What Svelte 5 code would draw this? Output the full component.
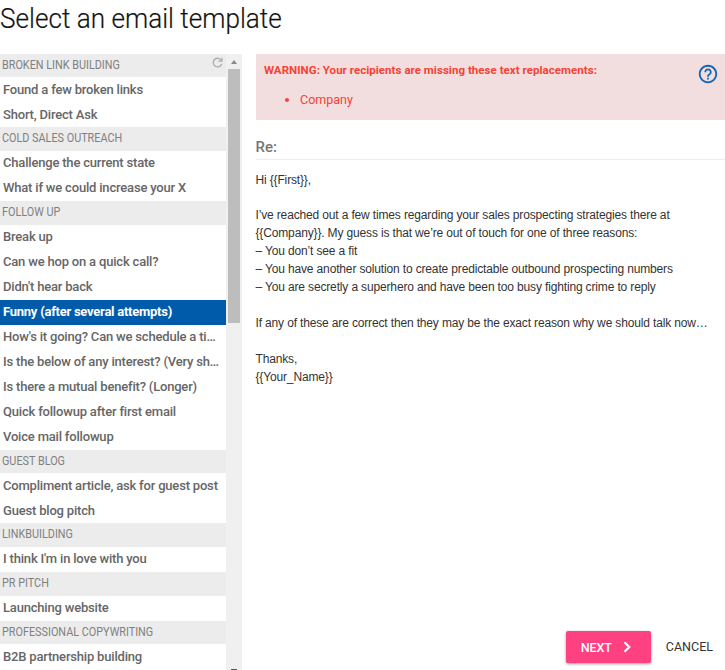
<script>
  let selected = $state("Funny (after several attempts)");

  const groups = [
    { name: "Broken link building", items: ["Found a few broken links", "Short, Direct Ask"] },
    { name: "Cold sales outreach", items: ["Challenge the current state", "What if we could increase your X"] },
    {
      name: "Follow up",
      items: [
        "Break up",
        "Can we hop on a quick call?",
        "Didn't hear back",
        "Funny (after several attempts)",
        "How's it going? Can we schedule a ti…",
        "Is the below of any interest? (Very sh…",
        "Is there a mutual benefit? (Longer)",
        "Quick followup after first email",
        "Voice mail followup",
      ],
    },
    { name: "Guest blog", items: ["Compliment article, ask for guest post", "Guest blog pitch"] },
    { name: "Linkbuilding", items: ["I think I'm in love with you"] },
    { name: "PR pitch", items: ["Launching website"] },
    { name: "Professional copywriting", items: ["B2B partnership building"] },
  ];

  const missing = ["Company"];

  const message = `Hi {{First}},

I’ve reached out a few times regarding your sales prospecting strategies there at
{{Company}}. My guess is that we’re out of touch for one of three reasons:
– You don’t see a fit
– You have another solution to create predictable outbound prospecting numbers
– You are secretly a superhero and have been too busy fighting crime to reply

If any of these are correct then they may be the exact reason why we should talk now…

Thanks,
{{Your_Name}}`;
</script>

<div class="dialog">
  <h1>Select an email template</h1>

  <div class="content">
    <aside class="sidebar">
      <div class="list">
        {#each groups as group, i}
          <div class="group-name">
            <span>{group.name}</span>
            {#if i === 0}
              <svg class="refresh" viewBox="0 0 12 12" aria-hidden="true">
                <path d="M10.1 3.7A4.7 4.7 0 1 0 10.5 7.6" />
                <path d="M10.8 0.9V4.6H7" />
              </svg>
            {/if}
          </div>
          {#each group.items as item}
            <button class="item" class:selected={item === selected} onclick={() => (selected = item)}>
              {item}
            </button>
          {/each}
        {/each}
      </div>
      <div class="scrollbar">
        <div class="arrow up"></div>
        <div class="thumb"></div>
        <div class="arrow down"></div>
      </div>
    </aside>

    <main class="preview">
      <div class="warning">
        <div class="warning-text">
          <strong>WARNING: Your recipients are missing these text replacements:</strong>
          <ul>
            {#each missing as field}
              <li>{field}</li>
            {/each}
          </ul>
        </div>
        <svg class="help" viewBox="0 0 24 24" aria-hidden="true">
          <path
            d="M11 18h2v-2h-2v2zm1-16C6.48 2 2 6.48 2 12s4.48 10 10 10 10-4.48 10-10S17.52 2 12 2zm0 18c-4.41 0-8-3.59-8-8s3.59-8 8-8 8 3.59 8 8-3.59 8-8 8zm0-14c-2.21 0-4 1.79-4 4h2c0-1.1.9-2 2-2s2 .9 2 2c0 2-3 1.75-3 5h2c0-2.25 3-2.5 3-5 0-2.21-1.79-4-4-4z"
          />
        </svg>
      </div>
      <div class="subject">Re:</div>
      <div class="message">{message}</div>
      <div class="actions">
        <button class="next">
          NEXT
          <svg viewBox="0 0 8 12" aria-hidden="true"><path d="M1.5 1.2L6.3 6L1.5 10.8" /></svg>
        </button>
        <button class="cancel">CANCEL</button>
      </div>
    </main>
  </div>
</div>

<style>
  :global(body) {
    background: #fff;
    overflow: hidden;
  }

  .dialog {
    height: 670px;
    display: flex;
    flex-direction: column;
    overflow: hidden;
    font-family: Roboto, sans-serif;
  }

  h1 {
    flex: none;
    height: 54px;
    margin: 0;
    box-sizing: border-box;
    padding-top: 1px;
    font-size: 28px;
    font-weight: 300;
    line-height: 35px;
    color: #111;
    white-space: nowrap;
    transform: scaleX(0.934);
    transform-origin: left;
    -webkit-text-stroke: 0.2px #222;
  }

  .content {
    flex: 1;
    min-height: 0;
    display: flex;
    gap: 13.5px;
  }

  .sidebar {
    width: 242px;
    flex: none;
    display: flex;
    overflow: hidden;
  }

  .list {
    width: 226px;
    overflow: hidden;
  }

  .group-name {
    display: flex;
    justify-content: space-between;
    height: 23.65px;
    padding: 0 3px 0 2px;
    background: #ececec;
    color: #808080;
    font-size: 12px;
    line-height: 23px;
    text-transform: uppercase;
  }

  .group-name span {
    transform: scaleX(0.902);
    transform-origin: left;
  }

  .group-name:first-child {
    height: 23.3px;
  }

  .refresh {
    width: 11px;
    height: 11px;
    margin-top: 3px;
    fill: none;
    stroke: #aaa;
    stroke-width: 1.4;
  }

  button {
    border: none;
    background: none;
    font-family: inherit;
    cursor: pointer;
  }

  .item {
    display: block;
    width: 100%;
    height: 25px;
    padding: 0 6px 0 3px;
    overflow: hidden;
    color: #666;
    font-size: 13px;
    font-weight: 500;
    line-height: 24px;
    letter-spacing: -0.19px;
    text-align: left;
    text-overflow: ellipsis;
    white-space: nowrap;
  }

  .item.selected {
    background: #005cab;
    color: #fff;
    font-weight: 700;
    letter-spacing: -0.25px;
  }

  .scrollbar {
    width: 16px;
    display: flex;
    flex-direction: column;
    align-items: center;
    background: #f0f0f0;
  }

  .arrow {
    border: 3px solid transparent;
  }

  .up {
    margin-top: 3px;
    border-bottom: 4px solid #888;
  }

  .thumb {
    width: 12px;
    height: 254px;
    margin-top: 5px;
    margin-right: 1px;
    background: #bdbdbd;
  }

  .down {
    width: 6px;
    height: 1px;
    margin-top: auto;
    border: none;
    background: #555;
  }

  .preview {
    flex: 1;
    min-width: 0;
    display: flex;
    flex-direction: column;
  }

  .warning {
    display: flex;
    justify-content: space-between;
    height: 66px;
    box-sizing: border-box;
    padding: 8.5px 6px 0 8.5px;
    background: #f2dede;
    color: #f44336;
  }

  .warning strong {
    display: block;
    font-size: 11.5px;
    font-weight: 700;
    line-height: 14px;
    letter-spacing: 0.04px;
  }

  .warning ul {
    margin: 14px 0 0;
    padding-left: 36px;
    font-size: 12.5px;
    line-height: 18px;
  }

  .help {
    width: 22px;
    height: 22px;
    fill: #1565b5;
  }

  .subject {
    height: 40px;
    box-sizing: border-box;
    padding-top: 18px;
    border-bottom: 1px solid #ededed;
    color: #757575;
    font-size: 15px;
    font-weight: 500;
    line-height: 18px;
  }

  .message {
    margin-top: 11.5px;
    color: #333;
    font-family: "Liberation Sans", Arial, sans-serif;
    font-size: 12px;
    line-height: 17.95px;
    letter-spacing: -0.15px;
    white-space: pre;
  }

  .actions {
    display: flex;
    justify-content: flex-end;
    align-items: center;
    gap: 15px;
    margin: auto 12px 7px 0;
  }

  .next {
    display: flex;
    align-items: center;
    gap: 11px;
    width: 85px;
    height: 32px;
    padding: 0 0 0 15px;
    border-radius: 2px;
    background: #ff4081;
    box-shadow: 0 1px 3px rgba(0, 0, 0, 0.4);
    color: #fff;
    font-size: 12.5px;
    font-weight: 500;
    letter-spacing: -0.1px;
  }

  .next svg {
    width: 8px;
    height: 12px;
    fill: none;
    stroke: #fff;
    stroke-width: 2.2;
  }

  .cancel {
    padding: 0;
    color: #333;
    font-size: 12.5px;
    line-height: 16px;
  }
</style>
